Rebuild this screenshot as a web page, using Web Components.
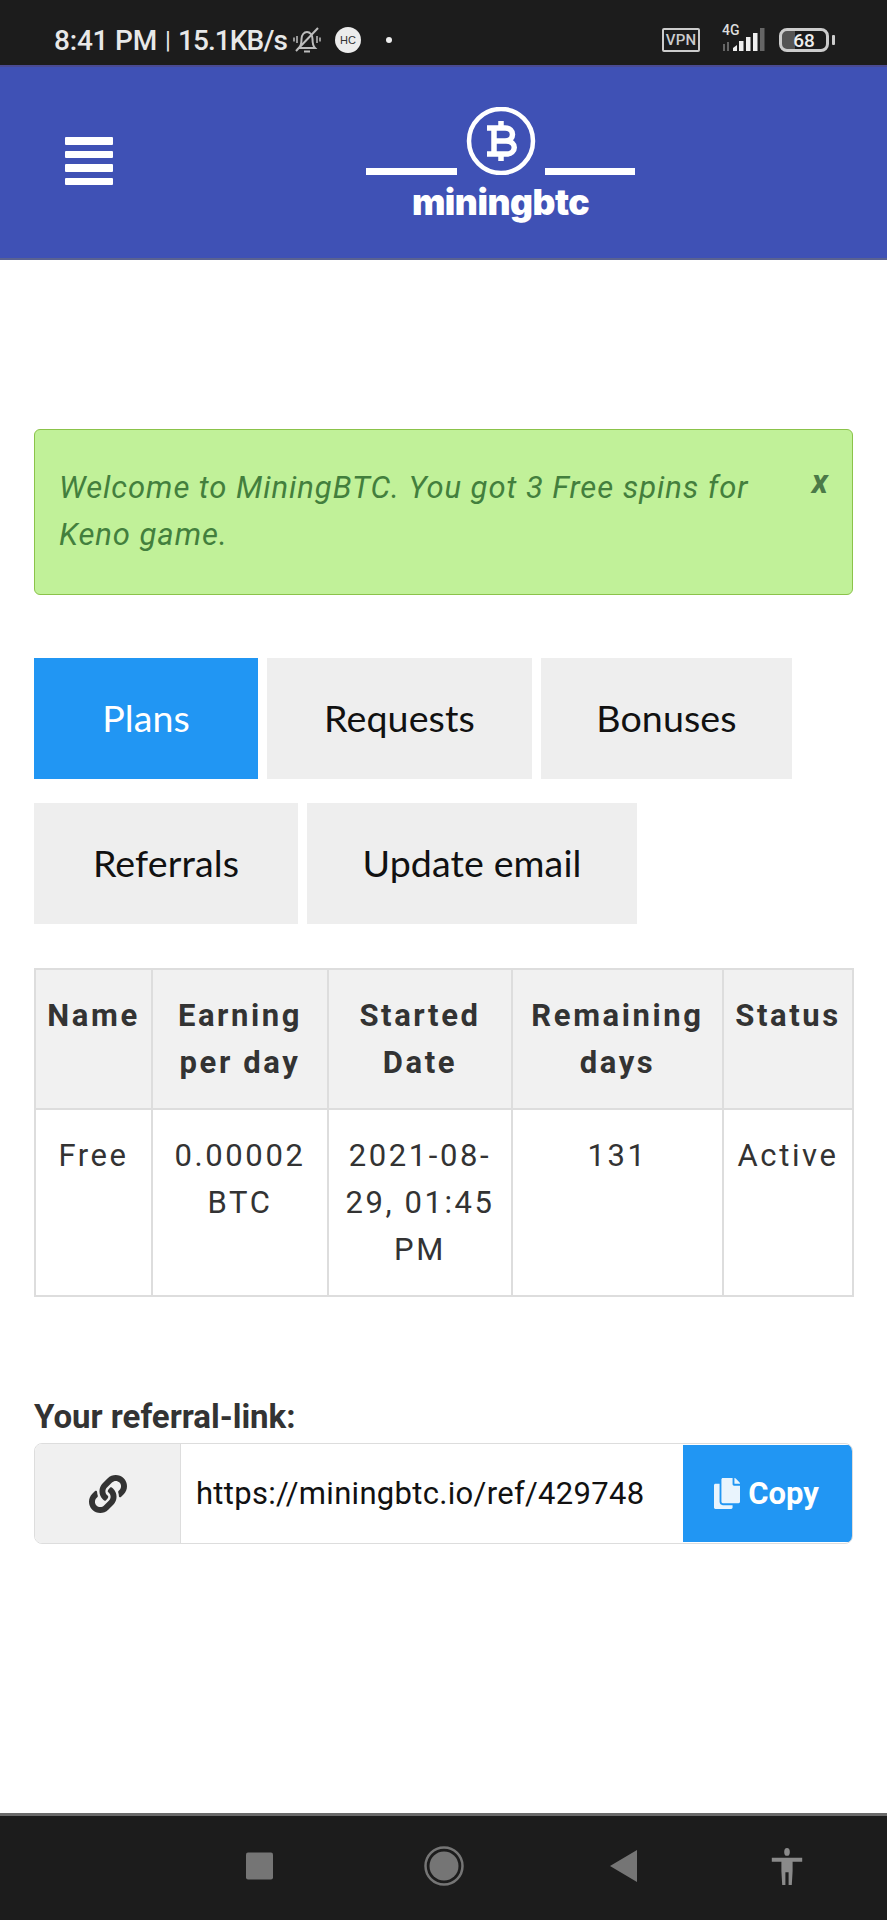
<!DOCTYPE html>
<html lang="en">
<head>
<meta charset="utf-8">
<title>MiningBTC</title>
<style>
  html, body { margin: 0; padding: 0; background: #fff; }
  body {
    display: flex;
    flex-direction: column;
    min-height: 1920px;
    font-family: Roboto, "Liberation Sans", sans-serif;
  }
  page-main { flex: 1; }
</style>
</head>
<body>
  <status-bar></status-bar>
  <site-header></site-header>
  <page-main>
    <alert-box>Welcome to MiningBTC. You got 3 Free spins for Keno game.</alert-box>
    <tab-bar>
      <tab-button active>Plans</tab-button>
      <tab-button style="width:265px">Requests</tab-button>
      <tab-button style="width:251px">Bonuses</tab-button>
      <tab-button style="width:264px">Referrals</tab-button>
      <tab-button style="width:330px">Update email</tab-button>
    </tab-bar>
    <plans-table></plans-table>
    <referral-link url="https://miningbtc.io/ref/429748"></referral-link>
  </page-main>
  <nav-bar></nav-bar>

<script>
class StatusBar extends HTMLElement {
  constructor() {
    super();
    this.attachShadow({mode: 'open'});
    this.shadowRoot.innerHTML = `
      <style>
        :host {
          display: flex;
          align-items: center;
          height: 65px;
          padding: 15px 54px 0;
          box-sizing: border-box;
          background: #1c1c1c;
          color: #e8e8e8;
          font: 500 28px Roboto, sans-serif;
        }
        .time { white-space: nowrap; letter-spacing: -0.2px; }
        .sep { font-weight: 400; font-size: 24px; margin: 0 7px 0 8px; }
        .speed { white-space: nowrap; letter-spacing: -0.9px; }
        .bell { margin-left: 6px; flex: none; }
        .hc {
          width: 26px; height: 26px; margin-left: 14px; border-radius: 50%;
          background: #ececec; color: #333; font: 400 11px "Liberation Sans", sans-serif;
          display: flex; align-items: center; justify-content: center;
        }
        .dot { width: 6px; height: 6px; margin-left: 25px; border-radius: 50%; background: #eee; }
        .right { margin-left: auto; margin-right: -2px; display: flex; align-items: center; }
        .vpn {
          width: 38px; height: 24px; box-sizing: border-box;
          border: 2px solid #ccc; border-radius: 2px; color: #ccc;
          font: 500 15px Roboto, sans-serif; letter-spacing: 0.2px;
          display: flex; align-items: center; justify-content: center;
        }
        .signal { margin-left: 21px; position: relative; width: 46px; height: 30px; }
        .signal span {
          position: absolute; left: 1px; top: -3px;
          font: 500 14px Roboto, sans-serif; color: #ddd;
        }
        .battery {
          margin-left: 12px; width: 50px; height: 24px; box-sizing: border-box;
          border: 3px solid #ccc; border-radius: 8px; position: relative;
          display: flex; align-items: center; justify-content: center;
          font: 500 19px Roboto, sans-serif; color: #eee;
          background: linear-gradient(90deg, #555 0 30%, transparent 30%);
          background-origin: padding-box;
        }
        .nub { width: 3px; height: 10px; margin-left: 3px; background: #ccc; border-radius: 1px; }
      </style>
      <span class="time">8:41 PM</span><span class="sep">|</span><span class="speed">15.1KB/s</span>
      <svg class="bell" width="28" height="30" viewBox="0 0 28 30" fill="none" stroke="#bdbdbd" stroke-width="2">
        <path d="M6 23c2-2 2.500-5 2.500-9 0-4 2.500-7 5.500-7s5.500 3 5.500 7c0 4 .5 7 2.500 9z"/>
        <path d="M11 26.500h6"/>
        <path d="M3 26 25 3"/>
        <path d="M4 11v7M1 12.500v4M24 11v7M27 12.500v4" stroke-width="1.5"/>
      </svg>
      <span class="hc">HC</span>
      <span class="dot"></span>
      <div class="right">
        <span class="vpn">VPN</span>
        <div class="signal">
          <span>4G</span>
          <svg width="46" height="30" viewBox="0 0 46 30">
            <rect x="2" y="19" width="2" height="7" fill="#666"/>
            <rect x="6" y="17" width="2" height="9" fill="#666"/>
            <path d="M12 26v-3l4-3v6z" fill="#eee"/>
            <rect x="18" y="16" width="4.500" height="10" fill="#eee"/>
            <rect x="25" y="12" width="4.500" height="14" fill="#eee"/>
            <rect x="32" y="8" width="4.500" height="18" fill="#eee"/>
            <rect x="39" y="3" width="4.500" height="23" fill="#666"/>
          </svg>
        </div>
        <span class="battery">68</span><span class="nub"></span>
      </div>
    `;
  }
}

class SiteHeader extends HTMLElement {
  constructor() {
    super();
    this.attachShadow({mode: 'open'});
    this.shadowRoot.innerHTML = `
      <style>
        :host {
          display: flex;
          align-items: flex-start;
          height: 195px;
          box-sizing: border-box;
          background: #3f51b5;
          border-top: 2px solid #4a4a92;
          border-bottom: 2px solid #5a6291;
        }
        .burger {
          width: 48px; margin: 70px 0 0 65px;
          display: flex; flex-direction: column; gap: 6px;
        }
        .burger i { display: block; height: 7.5px; background: #fff; border-radius: 1px; }
        .logo {
          margin: 40px 0 0 253px; width: 269px;
          display: flex; flex-direction: column; align-items: center;
        }
        .name {
          margin-top: 8px; color: #fff;
          font: 900 35.5px/40px Inter, sans-serif; letter-spacing: -0.5px;
        }
      </style>
      <div class="burger"><i></i><i></i><i></i><i></i></div>
      <div class="logo">
        <svg width="269" height="68" viewBox="0 0 269 68" fill="none" stroke="#fff">
          <path d="M0 64.500h91M179 64.500h90" stroke-width="7"/>
          <circle cx="135" cy="34" r="32" stroke-width="4.500"/>
          <g stroke-width="5.500">
            <path d="M121 21h18c10 0 10 13 0 13h-9M130 34h10c11 0 11 13 0 13h-19M128 21v26"/>
            <path d="M135 14v7M135 47v7"/>
          </g>
        </svg>
        <div class="name">miningbtc</div>
      </div>
    `;
  }
}

class PageMain extends HTMLElement {
  constructor() {
    super();
    this.attachShadow({mode: 'open'});
    this.shadowRoot.innerHTML = `
      <style>
        :host { display: block; padding: 169px 34px 0; }
      </style>
      <slot></slot>
    `;
  }
}

class AlertBox extends HTMLElement {
  constructor() {
    super();
    this.attachShadow({mode: 'open'});
    this.shadowRoot.innerHTML = `
      <style>
        :host {
          display: flex;
          justify-content: space-between;
          height: 166px;
          box-sizing: border-box;
          padding: 34px 24px 0 24px;
          background: #c1f199;
          border: 1px solid #8bc34a;
          border-radius: 6px;
          color: #437f3d;
          font: italic 400 31px/47px Roboto, sans-serif;
          letter-spacing: 0.95px;
        }
        .text { width: 720px; }
        .close { font-size: 33px; font-weight: 700; margin: -6px 0 0 0; letter-spacing: 0; color: #4c7a48; }
      </style>
      <div class="text"><slot></slot></div>
      <span class="close">x</span>
    `;
  }
}

class TabBar extends HTMLElement {
  constructor() {
    super();
    this.attachShadow({mode: 'open'});
    this.shadowRoot.innerHTML = `
      <style>
        :host {
          display: flex;
          flex-wrap: wrap;
          gap: 24px 9px;
          margin-top: 63px;
        }
      </style>
      <slot></slot>
    `;
  }
}

class TabButton extends HTMLElement {
  constructor() {
    super();
    this.attachShadow({mode: 'open'});
    this.shadowRoot.innerHTML = `
      <style>
        :host {
          display: flex;
          align-items: center;
          justify-content: center;
          width: 224px;
          height: 121px;
          padding-bottom: 2px;
          box-sizing: border-box;
          background: #eee;
          color: #111;
          font: 400 37.6px Lato, sans-serif;
          letter-spacing: 0.1px;
        }
        :host([active]) { background: #2196f3; color: #fff; }
      </style>
      <slot></slot>
    `;
  }
}

class PlansTable extends HTMLElement {
  constructor() {
    super();
    this.attachShadow({mode: 'open'});
    this.shadowRoot.innerHTML = `
      <style>
        :host { display: block; margin-top: 44px; }
        table {
          width: 818px;
          table-layout: fixed;
          border-collapse: collapse;
          color: #333;
          font: 400 31px/47px Roboto, sans-serif;
          letter-spacing: 2.6px;
          text-align: center;
        }
        th, td {
          border: 2px solid #ddd;
          padding: 22px 6px;
          vertical-align: top;
        }
        th { background: #f1f1f1; font-weight: 700; }
      </style>
      <table>
        <colgroup>
          <col style="width:117px"><col style="width:176px"><col style="width:184px"><col style="width:211px"><col style="width:130px">
        </colgroup>
        <tr><th>Name</th><th>Earning per day</th><th>Started Date</th><th>Remaining days</th><th>Status</th></tr>
        <tr><td>Free</td><td>0.00002 BTC</td><td>2021-08-29, 01:45 PM</td><td>131</td><td>Active</td></tr>
      </table>
    `;
  }
}

class ReferralLink extends HTMLElement {
  constructor() {
    super();
    this.attachShadow({mode: 'open'});
    const url = this.getAttribute('url');
    this.shadowRoot.innerHTML = `
      <style>
        :host { display: block; margin-top: 99px; color: #333; }
        .label { font: 700 33px/42px Roboto, sans-serif; margin-bottom: 5px; }
        .group {
          display: flex;
          height: 101px;
          box-sizing: border-box;
          border: 1px solid #ddd;
          border-radius: 8px;
          overflow: hidden;
        }
        .addon {
          width: 145px;
          background: #f0f0f0;
          border-right: 1px solid #ddd;
          display: flex; align-items: center; justify-content: center;
        }
        .input {
          flex: 1;
          display: flex; align-items: center;
          padding-left: 15px;
          color: #111;
          font: 400 31px Roboto, sans-serif;
          letter-spacing: 0.3px;
          white-space: nowrap;
        }
        .copy {
          width: 169px;
          margin: 1px 0;
          padding-right: 2px;
          box-sizing: border-box;
          background: #2196f3;
          color: #fff;
          font: 700 31px Roboto, sans-serif;
          display: flex; align-items: center; justify-content: center; gap: 8px;
        }
        .copy svg { opacity: .9; }
      </style>
      <div class="label">Your referral-link:</div>
      <div class="group">
        <div class="addon">
          <svg width="38" height="38" viewBox="0 0 512 512" fill="#333"><path d="M326.612 185.391c59.747 59.809 58.927 155.698.36 214.59-.11.12-.24.25-.36.37l-67.2 67.2c-59.27 59.27-155.699 59.262-214.96 0-59.27-59.26-59.27-155.7 0-214.96l37.106-37.106c9.84-9.84 26.786-3.3 27.294 10.606.648 17.722 3.826 35.527 9.69 52.721 1.986 5.822.567 12.262-3.783 16.612l-13.087 13.087c-28.026 28.026-28.905 73.66-1.155 101.96 28.024 28.579 74.086 28.749 102.325.51l67.2-67.19c28.191-28.191 28.073-73.757 0-101.83-3.701-3.694-7.429-6.564-10.341-8.569a16.037 16.037 0 0 1-6.947-12.606c-.396-10.567 3.348-21.456 11.698-29.806l21.054-21.055c5.521-5.521 14.182-6.199 20.584-1.731a152.482 152.482 0 0 1 20.522 17.197zM467.547 44.449c-59.261-59.262-155.69-59.27-214.96 0l-67.2 67.2c-.12.12-.25.25-.36.37-58.566 58.892-59.387 154.781.36 214.59a152.454 152.454 0 0 0 20.521 17.196c6.402 4.468 15.064 3.789 20.584-1.731l21.054-21.055c8.35-8.35 12.094-19.239 11.698-29.806a16.037 16.037 0 0 0-6.947-12.606c-2.912-2.005-6.64-4.875-10.341-8.569-28.073-28.073-28.191-73.639 0-101.83l67.2-67.19c28.239-28.239 74.3-28.069 102.325.51 27.75 28.3 26.872 73.934-1.155 101.96l-13.087 13.087c-4.35 4.35-5.769 10.79-3.783 16.612 5.864 17.194 9.042 34.999 9.69 52.721.509 13.906 17.454 20.446 27.294 10.606l37.106-37.106c59.271-59.259 59.271-155.699.001-214.959z"/></svg>
        </div>
        <div class="input">${url}</div>
        <div class="copy">
          <svg width="26" height="31" viewBox="0 0 448 512" preserveAspectRatio="none" fill="#fff"><path d="M320 448v40c0 13.255-10.745 24-24 24H24c-13.255 0-24-10.745-24-24V120c0-13.255 10.745-24 24-24h72v296c0 30.879 25.121 56 56 56h168zm0-344V0H152c-13.255 0-24 10.745-24 24v368c0 13.255 10.745 24 24 24h272c13.255 0 24-10.745 24-24V128H344c-13.2 0-24-10.8-24-24zm120.971-31.029L375.029 7.029A24 24 0 0 0 358.059 0H352v96h96v-6.059a24 24 0 0 0-7.029-16.97z"/></svg>
          <span>Copy</span>
        </div>
      </div>
    `;
  }
}

class NavBar extends HTMLElement {
  constructor() {
    super();
    this.attachShadow({mode: 'open'});
    this.shadowRoot.innerHTML = `
      <style>
        :host {
          display: flex;
          align-items: center;
          height: 107px;
          box-sizing: border-box;
          padding: 0 0 4px 246px;
          background: #1c1c1c;
          border-top: 3px solid #6a6a6a;
        }
        svg { display: block; flex: none; }
        .home { margin-left: 151px; }
        .back { margin-left: 146px; }
        .access { margin-left: 134px; }
      </style>
      <svg width="27" height="28" viewBox="0 0 27 28"><rect width="27" height="27" y="0.5" rx="2" fill="#757575"/></svg>
      <svg class="home" width="40" height="40" viewBox="0 0 40 40" fill="#757575"><circle cx="20" cy="20" r="14.500"/><circle cx="20" cy="20" r="18.500" fill="none" stroke="#757575" stroke-width="2.500"/></svg>
      <svg class="back" width="27" height="32" viewBox="0 0 27 32"><path d="M27 0v32L0 16z" fill="#757575"/></svg>
      <svg class="access" width="32" height="37" viewBox="0 0 40 38" preserveAspectRatio="none" fill="#8a8a8a"><ellipse cx="20" cy="4" rx="3.500" ry="4"/><path d="M1 10h38v4H27v10l-1 14h-4V25h-4v13h-4l-1-14V14H1z"/></svg>
    `;
  }
}

customElements.define('status-bar', StatusBar);
customElements.define('site-header', SiteHeader);
customElements.define('page-main', PageMain);
customElements.define('alert-box', AlertBox);
customElements.define('tab-bar', TabBar);
customElements.define('tab-button', TabButton);
customElements.define('plans-table', PlansTable);
customElements.define('referral-link', ReferralLink);
customElements.define('nav-bar', NavBar);
</script>
</body>
</html>
